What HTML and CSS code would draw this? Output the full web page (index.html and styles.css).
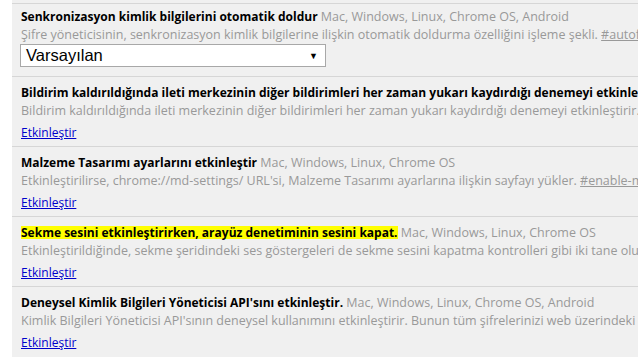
FILE: index.html
```html
<!DOCTYPE html>
<html lang="tr">
<head>
<meta charset="utf-8">
<link rel="stylesheet" href="styles.css">
</head>
<body>
<div class="page">
  <div class="list">
    <div class="tail"></div>
    <div class="exp exp-first">
      <div class="title"><b>Senkronizasyon kimlik bilgilerini otomatik doldur</b> <span class="plat">Mac, Windows, Linux, Chrome OS, Android</span></div>
      <div class="desc">Şifre yöneticisinin, senkronizasyon kimlik bilgilerine ilişkin otomatik doldurma özelliğini işleme şekli. <a class="anchor">#autofill-sync-credential</a></div>
      <div class="select"><span class="sel-text">Varsayılan</span><span class="sel-arrow">▼</span></div>
    </div>
    <div class="exp">
      <div class="title"><b>Bildirim kaldırıldığında ileti merkezinin diğer bildirimleri her zaman yukarı kaydırdığı denemeyi etkinleştir.</b></div>
      <div class="desc">Bildirim kaldırıldığında ileti merkezinin diğer bildirimleri her zaman yukarı kaydırdığı denemeyi etkinleştirir.</div>
      <a class="enable">Etkinleştir</a>
    </div>
    <div class="exp">
      <div class="title"><b>Malzeme Tasarımı ayarlarını etkinleştir</b> <span class="plat">Mac, Windows, Linux, Chrome OS</span></div>
      <div class="desc">Etkinleştirilirse, chrome://md-settings/ URL'si, Malzeme Tasarımı ayarlarına ilişkin sayfayı yükler. <a class="anchor">#enable-md-settings</a></div>
      <a class="enable">Etkinleştir</a>
    </div>
    <div class="exp">
      <div class="title"><b class="hl">Sekme sesini etkinleştirirken, arayüz denetiminin sesini kapat.</b> <span class="plat">Mac, Windows, Linux, Chrome OS</span></div>
      <div class="desc">Etkinleştirildiğinde, sekme şeridindeki ses göstergeleri de sekme sesini kapatma kontrolleri gibi iki tane olur.</div>
      <a class="enable">Etkinleştir</a>
    </div>
    <div class="exp">
      <div class="title"><b>Deneysel Kimlik Bilgileri Yöneticisi API'sını etkinleştir.</b> <span class="plat">Mac, Windows, Linux, Chrome OS, Android</span></div>
      <div class="desc">Kimlik Bilgileri Yöneticisi API'sının deneysel kullanımını etkinleştirir. Bunun tüm şifrelerinizi web üzerindeki tüm sitelerle paylaşır.</div>
      <a class="enable">Etkinleştir</a>
    </div>
  </div>
</div>
</body>
</html>
```
FILE: styles.css
```css
html, body {
  margin: 0;
  padding: 0;
  background: #ffffff;
  overflow: hidden;
}
.page {
  padding-left: 12px;
  height: 357px;
  font-family: "Open Sans", "Noto Sans", sans-serif;
  font-size: 12.5px;
}
.list {
  background: #f0f0f0;
  height: 100%;
}
.tail {
  height: 3px;
}
.exp {
  border-top: 1px solid #d6d6d6;
  height: 69px;
  padding: 0 0 0 9px;
  white-space: nowrap;
  overflow: hidden;
}
.exp-first {
  height: 72px;
}
.title {
  margin-top: 7px;
  line-height: 18px;
  color: #000;
}
.exp-first .title {
  margin-top: 4px;
}
.title b {
  font-weight: 700;
  font-size: 12px;
}
.hl {
  background: linear-gradient(to bottom, transparent 2px, #ffff00 2px, #ffff00 15px, transparent 15px);
}
.plat {
  color: #999;
}
.desc {
  line-height: 18px;
  color: #999;
}
.anchor {
  color: #999;
  text-decoration: underline;
}
.select {
  margin-left: -1px;
  width: 304px;
  height: 21px;
  background: #fff;
  border: 1px solid #a8a8a8;
  display: flex;
  align-items: center;
  justify-content: space-between;
  font-family: "Liberation Sans", Arial, sans-serif;
  font-size: 16.5px;
  color: #000;
}
.sel-text {
  padding-left: 5px;
}
.sel-arrow {
  font-size: 9px;
  padding-right: 7px;
}
.enable {
  display: inline-block;
  margin-top: 4px;
  line-height: 18px;
  font-size: 12px;
  color: #0000cc;
  text-decoration: underline;
}
```
